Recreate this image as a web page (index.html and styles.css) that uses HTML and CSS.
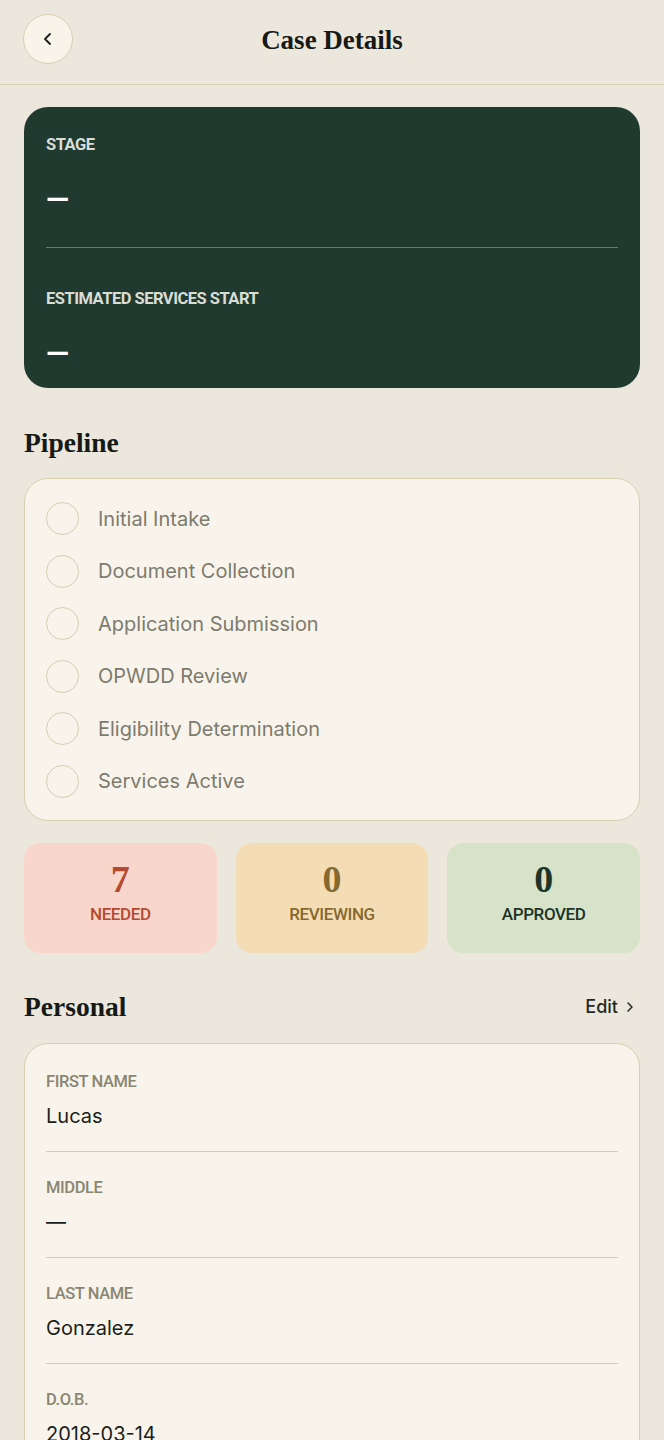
FILE: index.html
```html
<!DOCTYPE html>
<html lang="en">
<head>
<meta charset="utf-8">
<title>Case Details</title>
<link rel="stylesheet" href="styles.css">
</head>
<body>
<header class="topbar">
  <button class="back" aria-label="Back">
    <svg width="16" height="16" viewBox="0 0 16 16"><path d="M10 3 L5 8 L10 13" fill="none" stroke="#1b1f1c" stroke-width="1.8" stroke-linecap="round" stroke-linejoin="round"/></svg>
  </button>
  <h1 class="title">Case Details</h1>
</header>

<main class="content">
  <section class="summary">
    <div class="summary-row first">
      <div class="summary-label">STAGE</div>
      <div class="summary-value">—</div>
    </div>
    <div class="summary-row second">
      <div class="summary-label">ESTIMATED SERVICES START</div>
      <div class="summary-value">—</div>
    </div>
  </section>

  <h2 class="section-title">Pipeline</h2>
  <ul class="pipeline">
    <li class="step"><span class="dot"></span>Initial Intake</li>
    <li class="step"><span class="dot"></span>Document Collection</li>
    <li class="step"><span class="dot"></span>Application Submission</li>
    <li class="step"><span class="dot"></span>OPWDD Review</li>
    <li class="step"><span class="dot"></span>Eligibility Determination</li>
    <li class="step"><span class="dot"></span>Services Active</li>
  </ul>

  <div class="stats">
    <div class="stat needed"><div class="stat-num">7</div><div class="stat-label">NEEDED</div></div>
    <div class="stat reviewing"><div class="stat-num">0</div><div class="stat-label">REVIEWING</div></div>
    <div class="stat approved"><div class="stat-num">0</div><div class="stat-label">APPROVED</div></div>
  </div>

  <div class="section-head">
    <h2 class="section-title inline">Personal</h2>
    <a class="edit" href="#">Edit
      <svg width="12" height="12" viewBox="0 0 12 12"><path d="M4 2 L8 6 L4 10" fill="none" stroke="#1f2a24" stroke-width="1.5" stroke-linecap="round" stroke-linejoin="round"/></svg>
    </a>
  </div>
  <div class="fields">
    <div class="field"><div class="field-label">FIRST NAME</div><div class="field-value">Lucas</div></div>
    <div class="field"><div class="field-label">MIDDLE</div><div class="field-value">—</div></div>
    <div class="field"><div class="field-label">LAST NAME</div><div class="field-value">Gonzalez</div></div>
    <div class="field"><div class="field-label">D.O.B.</div><div class="field-value">2018-03-14</div></div>
  </div>
</main>
</body>
</html>
```
FILE: styles.css
```css
* { box-sizing: border-box; }
html, body { margin: 0; padding: 0; }
body {
  background: #ece7dc;
  font-family: "Inter", "Roboto", sans-serif;
  color: #1b1f1c;
  width: 664px;
}
.topbar {
  position: relative;
  height: 85px;
  border-bottom: 1.5px solid #d8cfb5;
  display: flex;
  align-items: flex-start;
  padding: 14px 0 0 23px;
}
.back {
  width: 50px;
  height: 50px;
  border-radius: 50%;
  background: #f8f4ea;
  border: 1.5px solid #d8cfb0;
  display: flex;
  align-items: center;
  justify-content: center;
  padding: 0;
}
.title {
  position: absolute;
  left: 0; right: 0; top: 24px;
  margin: 0;
  text-align: center;
  font-family: "Liberation Serif", serif;
  font-weight: 700;
  font-size: 27px;
  line-height: 32px;
  color: #161a17;
  pointer-events: none;
}
.content { padding: 22px 24px 0; }

.summary {
  background: #213a2f;
  border-radius: 24px;
  padding: 0 22px;
  height: 281px;
}
.summary-row.first { padding-top: 28px; height: 141px; border-bottom: 1.5px solid #5f7c6e; }
.summary-row.second { padding-top: 41px; }
.summary-label {
  font-family: "Roboto", sans-serif;
  font-weight: 700;
  font-size: 16.5px;
  line-height: 20px;
  letter-spacing: -0.5px;
  color: #d9ddd5;
}
.summary-value {
  margin-top: 30px;
  font-family: "Roboto", sans-serif;
  font-size: 30px;
  line-height: 30px;
  color: #ffffff;
  font-weight: 700;
}

.section-title {
  margin: 40px 0 20px;
  font-family: "Liberation Serif", serif;
  font-weight: 700;
  font-size: 27.5px;
  line-height: 30px;
  color: #161a17;
}
.pipeline {
  list-style: none;
  margin: 0;
  padding: 23px 21px 22px;
  background: #f8f4eb;
  border: 1.5px solid #d8cfb0;
  border-radius: 24px;
  display: flex;
  flex-direction: column;
  gap: 19.5px;
}
.step {
  display: flex;
  align-items: center;
  gap: 19px;
  height: 33px;
  font-size: 20px;
  color: #7d7b6d;
}
.dot {
  width: 33px;
  height: 33px;
  border-radius: 50%;
  border: 1.5px solid #d6cdaf;
  flex: none;
}

.stats {
  margin-top: 22px;
  display: grid;
  grid-template-columns: 1fr 1fr 1fr;
  gap: 19px;
}
.stat {
  height: 110px;
  border-radius: 16px;
  display: flex;
  flex-direction: column;
  align-items: center;
  padding-top: 16px;
}
.stat-num {
  font-family: "Liberation Serif", serif;
  font-weight: 700;
  font-size: 38px;
  line-height: 40px;
}
.stat-label {
  margin-top: 5px;
  font-family: "Roboto", sans-serif;
  font-weight: 500;
  font-size: 17px;
  line-height: 20px;
  letter-spacing: -0.4px;
}
.needed { background: #f8d6cc; }
.needed .stat-num, .needed .stat-label { color: #b44a30; }
.reviewing { background: #f4ddb5; }
.reviewing .stat-num, .reviewing .stat-label { color: #85692e; }
.approved { background: #d7e3c8; }
.approved .stat-num, .approved .stat-label { color: #1d3328; }

.section-head {
  display: flex;
  align-items: center;
  justify-content: space-between;
  margin: 39px 0 21px;
}
.section-title.inline { margin: 0; }
.edit {
  display: flex;
  align-items: center;
  gap: 6px;
  font-size: 18px;
  color: #1f2a24;
  text-decoration: none;
  font-weight: 500;
  padding-right: 4px;
}
.fields {
  background: #f8f4eb;
  border: 1.5px solid #d8cfb0;
  border-radius: 24px;
  padding: 2px 21px 0;
}
.field {
  padding: 26px 0 22px;
  border-bottom: 1.5px solid #d6cdaf;
}
.field:last-child { border-bottom: none; }
.field-label {
  font-family: "Roboto", sans-serif;
  font-weight: 500;
  font-size: 16.5px;
  line-height: 19px;
  letter-spacing: -0.4px;
  color: #8a8673;
}
.field-value {
  margin-top: 12px;
  font-size: 20px;
  line-height: 26px;
  color: #1b1f1c;
}
```
